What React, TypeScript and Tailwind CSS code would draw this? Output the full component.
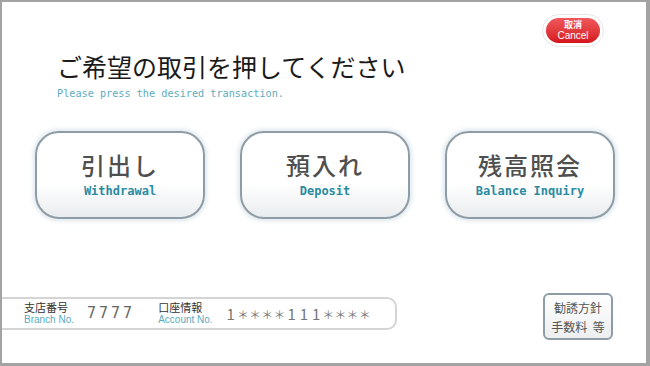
const menu = [
  { jp: '引出し', en: 'Withdrawal' },
  { jp: '預入れ', en: 'Deposit' },
  { jp: '残高照会', en: 'Balance Inquiry' },
];

const account = '1＊＊＊＊111＊＊＊＊'.split('');

function MenuButton({ label, sub }: { label: string; sub: string }) {
  return (
    <button className="flex h-[88px] w-[170px] flex-col items-center rounded-[24px] border-2 border-[#8d9ca5] bg-gradient-to-b from-white from-60% to-[#e9ecee] pt-[18px] shadow-[0_0_4px_2px_rgba(200,215,225,0.6)]">
      <span className="font-['Noto_Sans_CJK_JP',sans-serif] text-[24px] leading-[28px] font-medium tracking-[2px] text-[#4f4f4f]">
        {label}
      </span>
      <span className="mt-1 font-['DejaVu_Sans_Mono',monospace] text-[12px] leading-[16px] font-semibold text-[#2a8ba1]">
        {sub}
      </span>
    </button>
  );
}

export default function App() {
  return (
    <div className="flex h-[366px] w-[650px] flex-col border-t-2 border-r-4 border-b-[3px] border-l-2 border-[#a3a3a3] bg-white font-['Noto_Sans_CJK_JP',sans-serif]">
      {/* cancel */}
      <div className="flex justify-end pt-[12px] pr-[42px]">
        <div className="rounded-full border border-[#e6e6e6] bg-white p-[3px]">
          <div className="flex h-[25px] w-[54px] flex-col items-center justify-center rounded-full bg-gradient-to-b from-[#f0575b] to-[#d4121b] text-white">
            <span className="text-[9px] leading-[10px] font-bold">取消</span>
            <span className="font-['Liberation_Sans',sans-serif] text-[10px] leading-[11px]">Cancel</span>
          </div>
        </div>
      </div>

      {/* heading */}
      <div className="pl-[55px]">
        <div className="mt-[4px] text-[25px] leading-[30px] text-[#1a1a1a]">ご希望の取引を押してください</div>
        <div className="mt-[6px] font-['DejaVu_Sans_Mono',monospace] text-[10.2px] leading-[14px] text-[#5eabc0]">
          Please press the desired transaction.
        </div>
      </div>

      {/* menu */}
      <div className="mt-[30px] flex gap-[35px] pl-[33px]">
        {menu.map((m) => (
          <MenuButton key={m.en} label={m.jp} sub={m.en} />
        ))}
      </div>

      {/* footer */}
      <div className="mt-[74px] flex items-start justify-between pr-[33px]">
        <div className="mt-[4px] flex h-[33px] w-[395px] items-center rounded-r-[10px] border-y-2 border-r-2 border-[#d4d4d4] pl-[22px]">
          <div className="flex flex-col">
            <span className="text-[11px] leading-[13px] text-[#333]">支店番号</span>
            <span className="font-['Liberation_Sans',sans-serif] text-[10px] leading-[12px] text-[#5aaac0]">Branch No.</span>
          </div>
          <span className="ml-[13px] font-['DejaVu_Sans_Mono',monospace] text-[15px] font-light tracking-[3px] text-[#666]">7777</span>
          <div className="ml-[23px] flex flex-col">
            <span className="text-[11px] leading-[13px] text-[#333]">口座情報</span>
            <span className="font-['Liberation_Sans',sans-serif] text-[10px] leading-[12px] text-[#5aaac0]">Account No.</span>
          </div>
          <div className="ml-[12px] flex items-center text-[#777]">
            {account.map((c, i) => (
              <span
                key={i}
                className={c === '1' ? 'w-[12.2px] text-center text-[15px] leading-[20px]' : 'w-[12.2px] text-center text-[11.5px] leading-[20px]'}
              >
                {c}
              </span>
            ))}
          </div>
        </div>
        <button className="flex h-[47px] w-[70px] flex-col items-center justify-center rounded-[6px] border-2 border-[#8d9ca5] bg-gradient-to-b from-white to-[#eceeef] text-[12px] leading-[19px] text-[#555]">
          <span>勧誘方針</span>
          <span className="whitespace-pre">手数料  等</span>
        </button>
      </div>
    </div>
  );
}
